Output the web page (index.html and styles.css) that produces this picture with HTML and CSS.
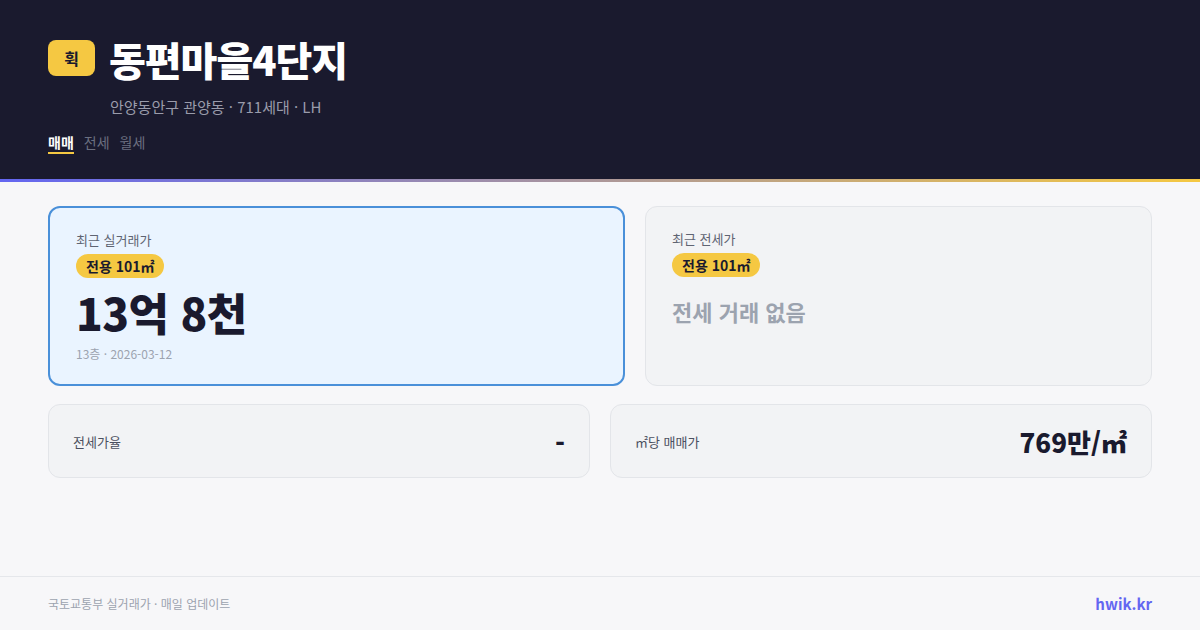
FILE: index.html
```html
<!DOCTYPE html>
<html lang="ko">
<head>
<meta charset="utf-8">
<title>동편마을4단지</title>
<link rel="stylesheet" href="styles.css">
</head>
<body>
<div class="page">
  <header class="header">
    <div class="title-row">
      <div class="logo">휙</div>
      <h1 class="title">동편마을4단지</h1>
    </div>
    <p class="subtitle">안양동안구 관양동 · 711세대 · LH</p>
    <nav class="tabs">
      <span class="tab active">매매</span>
      <span class="tab">전세</span>
      <span class="tab">월세</span>
    </nav>
  </header>
  <div class="accent"></div>
  <main class="main">
    <section class="row-top">
      <div class="card card-primary">
        <div class="card-label">최근 실거래가</div>
        <span class="badge">전용 101㎡</span>
        <div class="price">13억 8천</div>
        <div class="meta">13층 · 2026-03-12</div>
      </div>
      <div class="card card-muted">
        <div class="card-label">최근 전세가</div>
        <span class="badge">전용 101㎡</span>
        <div class="empty">전세 거래 없음</div>
      </div>
    </section>
    <section class="row-bottom">
      <div class="stat">
        <span class="stat-label">전세가율</span>
        <span class="stat-value">-</span>
      </div>
      <div class="stat">
        <span class="stat-label">㎡당 매매가</span>
        <span class="stat-value">769만/㎡</span>
      </div>
    </section>
  </main>
  <footer class="footer">
    <span class="source">국토교통부 실거래가 · 매일 업데이트</span>
    <span class="brand">hwik.kr</span>
  </footer>
</div>
</body>
</html>
```

FILE: styles.css
```css
* {
  box-sizing: border-box;
}

html, body {
  margin: 0;
  padding: 0;
}

body {
  width: 1200px;
  height: 630px;
  overflow: hidden;
  background: #f7f7f9;
  font-family: "Noto Sans CJK KR", "Noto Sans", sans-serif;
  color: #1a1a2e;
}

.page {
  display: flex;
  flex-direction: column;
  height: 630px;
}

.header {
  background: #1a1a2e;
  padding: 34px 48px 24px;
  height: 179px;
}

.title-row {
  display: flex;
  align-items: center;
  gap: 14px;
}

.logo {
  width: 47px;
  height: 36px;
  border-radius: 8px;
  background: #f5c842;
  color: #1a1a2e;
  font-size: 16px;
  font-weight: 700;
  display: flex;
  align-items: center;
  justify-content: center;
  margin-top: -3px;
}

.title {
  margin: 0;
  font-size: 40px;
  line-height: 50px;
  font-weight: 900;
  letter-spacing: -1px;
  color: #ffffff;
}

.subtitle {
  margin: 12px 0 0;
  padding-left: 62px;
  font-size: 15px;
  line-height: 22px;
  color: #9a9cab;
}

.tabs {
  display: flex;
  gap: 10px;
  margin-top: 15px;
}

.tab {
  font-size: 14px;
  line-height: 19px;
  color: #6b6f80;
  border-bottom: 2px solid transparent;
}

.tab.active {
  color: #ffffff;
  font-weight: 700;
  border-bottom-color: #f5c842;
}

.accent {
  height: 3px;
  background: linear-gradient(90deg, #6366f1 0%, #f5c842 100%);
}

.main {
  flex: 1;
  padding: 24px 48px;
}

.row-top {
  display: grid;
  grid-template-columns: 577fr 507fr;
  gap: 20px;
}

.card {
  border-radius: 12px;
  padding: 22px 26px 21px;
}

.card-primary {
  background: #eaf4ff;
  border: 2px solid #4a90d9;
}

.card-muted {
  background: #f2f3f5;
  border: 1px solid #e3e5e9;
}

.card-label {
  font-size: 13px;
  line-height: 19px;
  color: #5f6472;
}

.badge {
  display: inline-block;
  margin-top: 5px;
  padding: 0 10px;
  height: 24px;
  line-height: 24px;
  border-radius: 12px;
  background: #f5c842;
  color: #1a1a2e;
  font-size: 14px;
  font-weight: 700;
}

.price {
  margin-top: 8px;
  font-size: 44px;
  line-height: 53px;
  font-weight: 900;
  letter-spacing: -0.5px;
  color: #1a1a2e;
}

.meta {
  margin-top: 6px;
  font-size: 12px;
  line-height: 18px;
  color: #9ca3af;
}

.empty {
  margin-top: 8px;
  font-size: 22px;
  line-height: 53px;
  font-weight: 700;
  color: #9ca3af;
}

.row-bottom {
  display: grid;
  grid-template-columns: 1fr 1fr;
  gap: 20px;
  margin-top: 18px;
}

.stat {
  height: 74px;
  padding: 0 24px;
  background: #f2f3f5;
  border: 1px solid #e3e5e9;
  border-radius: 12px;
  display: flex;
  align-items: center;
  justify-content: space-between;
}

.stat-label {
  font-size: 13px;
  color: #4b5060;
}

.stat-value {
  font-size: 26px;
  font-weight: 800;
  color: #1a1a2e;
}

.footer {
  height: 54px;
  border-top: 1px solid #e5e7eb;
  padding: 0 48px;
  display: flex;
  align-items: center;
  justify-content: space-between;
}

.source {
  font-size: 12px;
  color: #9ca3af;
}

.brand {
  font-size: 15px;
  font-weight: 700;
  color: #6366f1;
}
```
